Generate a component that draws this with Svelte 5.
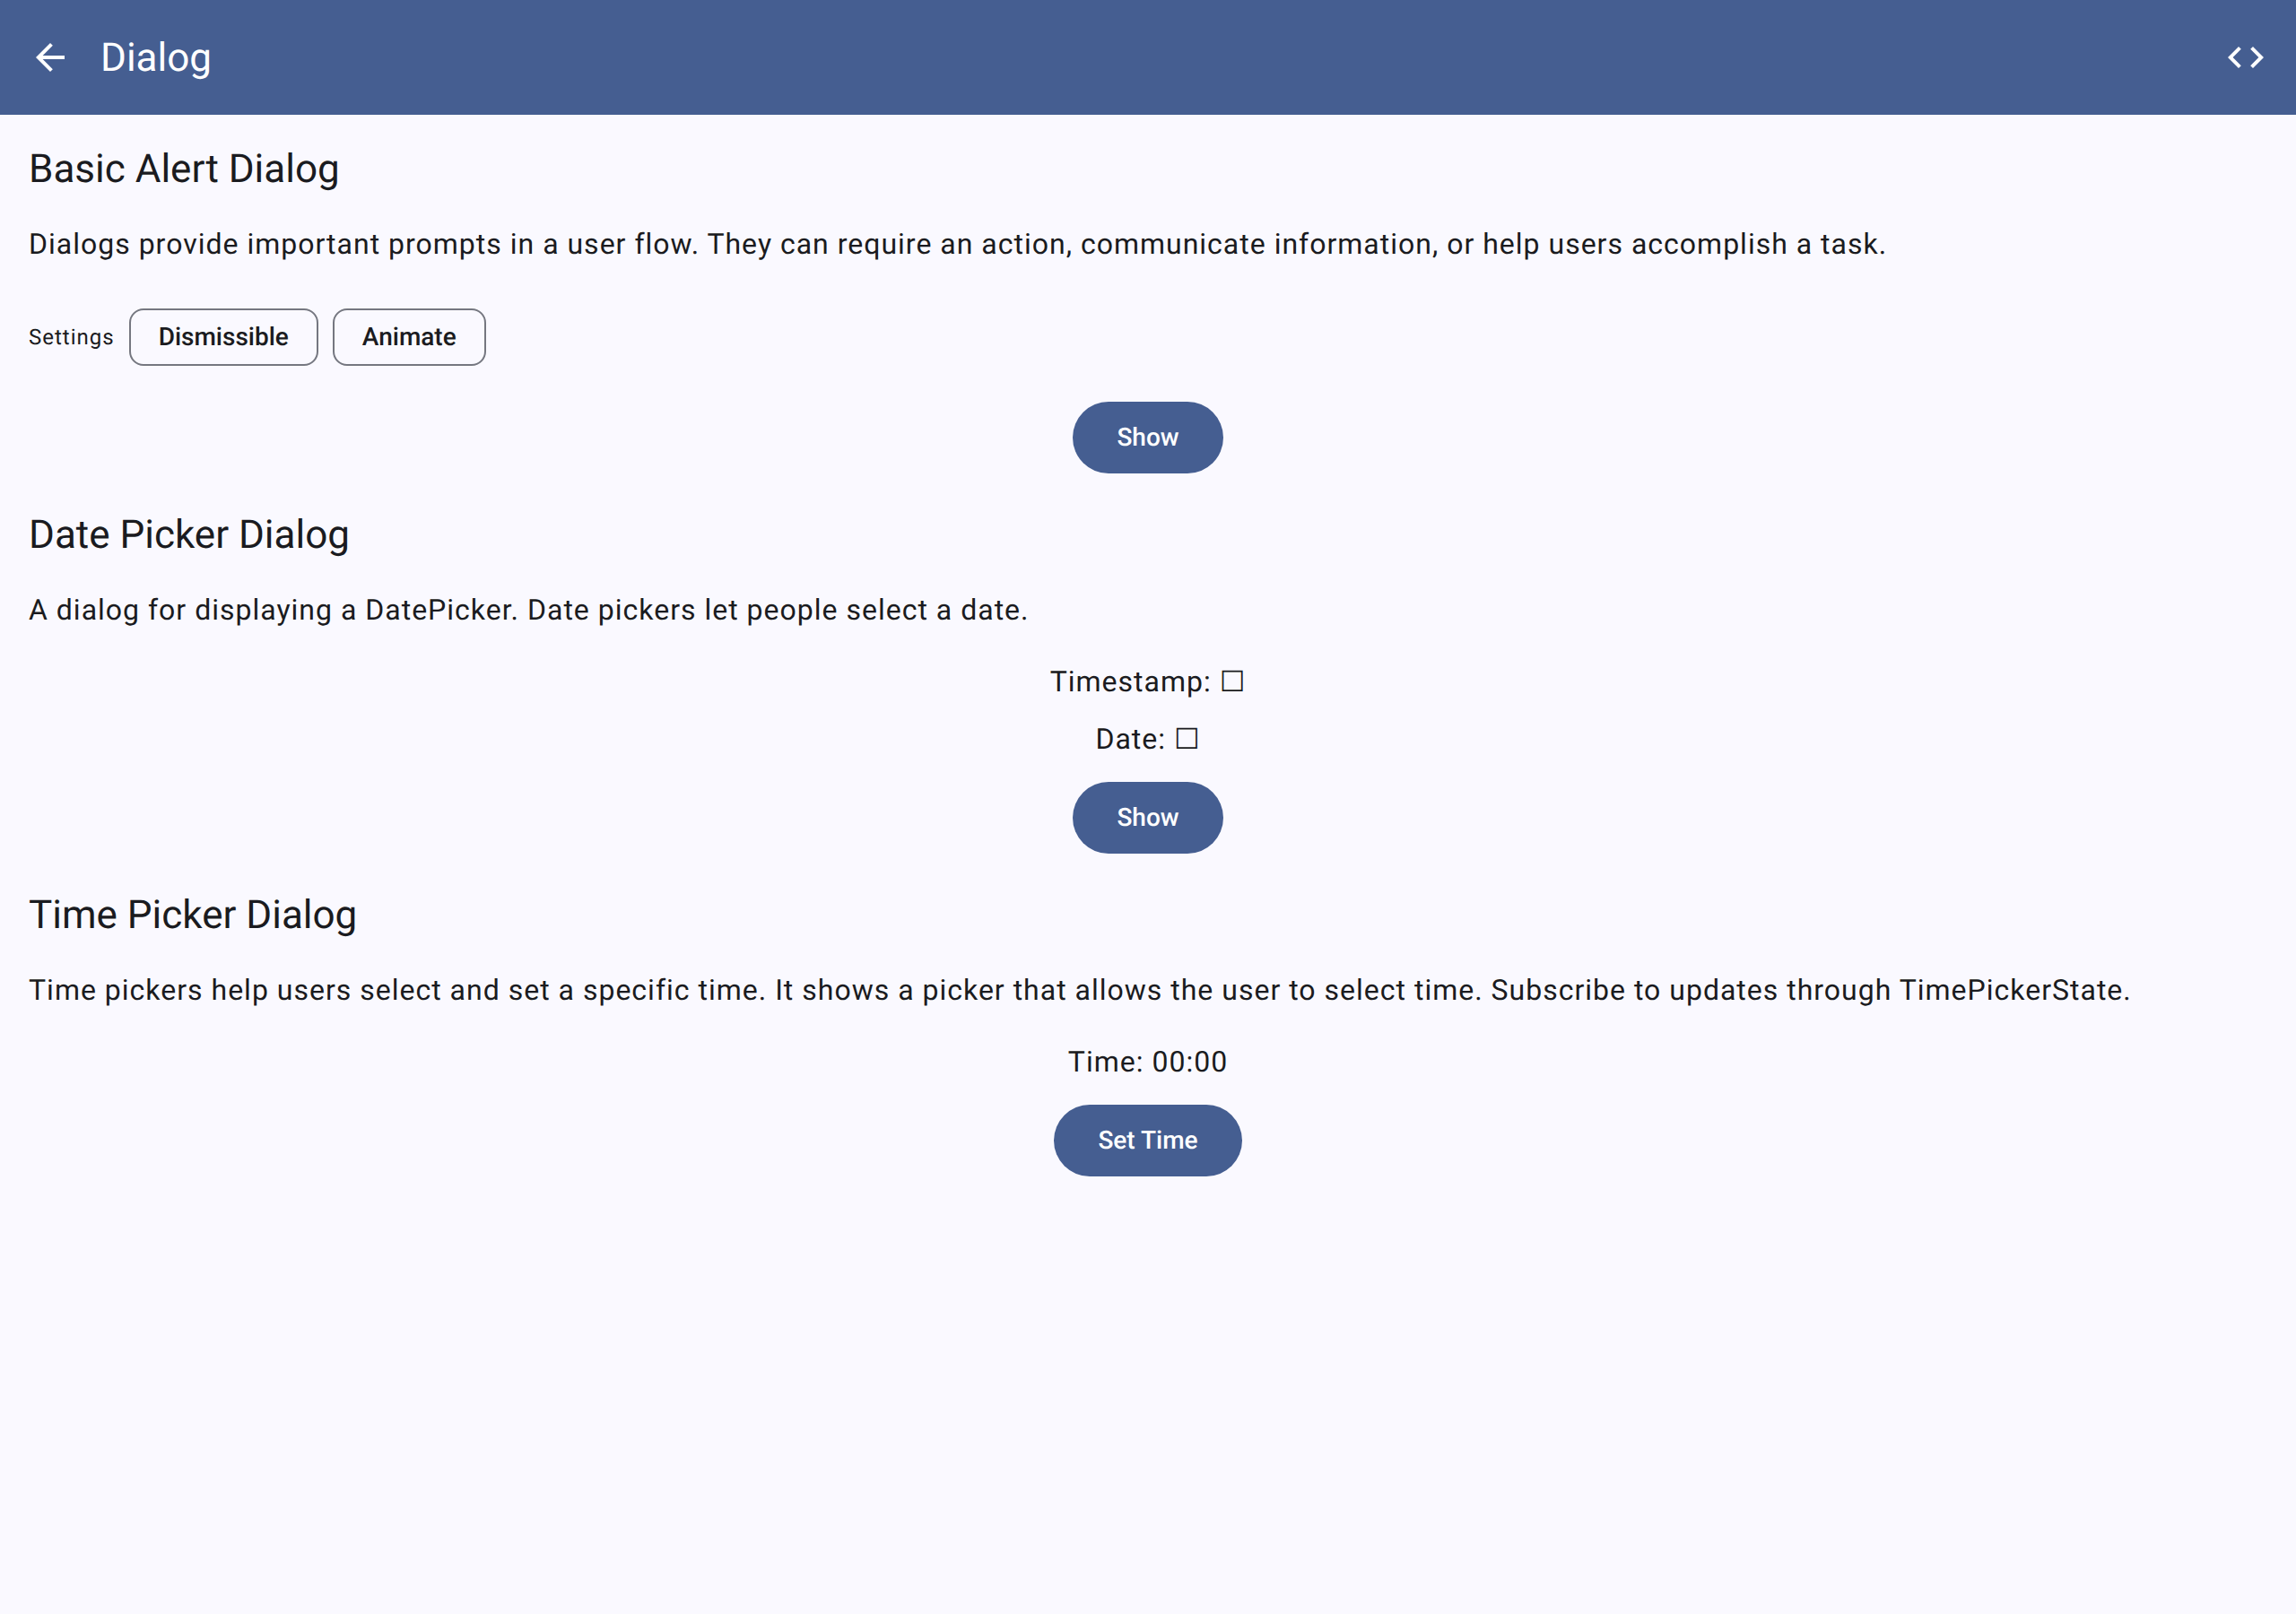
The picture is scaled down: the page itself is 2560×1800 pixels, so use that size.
<script>
  let settings = $state([
    { label: 'Dismissible', on: false },
    { label: 'Animate', on: false },
  ]);
</script>

<header class="bar">
  <button class="icon-button" type="button" aria-label="Back">
    <svg viewBox="0 0 24 24" aria-hidden="true">
      <path d="M20 11H7.83l5.59-5.59L12 4l-8 8 8 8 1.41-1.41L7.83 13H20v-2z" />
    </svg>
  </button>
  <h1 class="title">Dialog</h1>
  <button class="icon-button" type="button" aria-label="View source">
    <svg viewBox="0 0 24 24" aria-hidden="true">
      <path d="M9.4 16.6 4.8 12l4.6-4.6L8 6l-6 6 6 6 1.4-1.4zm5.2 0 4.6-4.6-4.6-4.6L16 6l6 6-6 6-1.4-1.4z" />
    </svg>
  </button>
</header>

<main class="content">
  <section class="section">
    <h2 class="title">Basic Alert Dialog</h2>
    <p class="body">
      Dialogs provide important prompts in a user flow. They can require an action, communicate
      information, or help users accomplish a task.
    </p>
    <div class="settings">
      <span class="caption">Settings</span>
      {#each settings as setting}
        <button
          class="chip"
          class:selected={setting.on}
          type="button"
          aria-pressed={setting.on}
          onclick={() => (setting.on = !setting.on)}>{setting.label}</button>
      {/each}
    </div>
    <div class="demo">
      <button class="filled" type="button">Show</button>
    </div>
  </section>

  <section class="section">
    <h2 class="title">Date Picker Dialog</h2>
    <p class="body">A dialog for displaying a DatePicker. Date pickers let people select a date.</p>
    <div class="demo">
      <p class="body">Timestamp: <span class="empty">☐</span></p>
      <p class="body">Date: <span class="empty">☐</span></p>
      <button class="filled" type="button">Show</button>
    </div>
  </section>

  <section class="section">
    <h2 class="title">Time Picker Dialog</h2>
    <p class="body">
      Time pickers help users select and set a specific time. It shows a picker that allows the user
      to select time. Subscribe to updates through TimePickerState.
    </p>
    <div class="demo">
      <p class="body">Time: 00:00</p>
      <button class="filled" type="button">Set Time</button>
    </div>
  </section>
</main>

<style>
  :global(body) {
    background: #faf9ff;
    color: #1a1b20;
    font-family: Roboto, 'Liberation Sans', sans-serif;
    text-rendering: geometricPrecision;
  }

  h1,
  h2,
  p {
    margin: 0;
  }

  button {
    font: inherit;
    text-rendering: inherit;
    cursor: pointer;
  }

  .bar {
    display: flex;
    align-items: center;
    gap: 32px;
    padding: 36px 32px;
    background: #455e91;
    color: #fff;
  }

  .bar .title {
    flex: 1;
  }

  .icon-button {
    display: flex;
    padding: 0;
    border: 0;
    background: none;
    color: inherit;
  }

  .icon-button svg {
    width: 48px;
    height: 48px;
    fill: currentColor;
  }

  .title {
    font-size: 44px;
    font-weight: 400;
    line-height: 56px;
  }

  .body {
    font-size: 32px;
    line-height: 48px;
    letter-spacing: 1px;
  }

  .content {
    display: flex;
    flex-direction: column;
    gap: 40px;
    padding: 32px;
  }

  .section {
    display: flex;
    flex-direction: column;
    gap: 32px;
  }

  .settings {
    display: flex;
    align-items: center;
    gap: 16px;
    padding: 16px 0 8px;
  }

  .caption {
    font-size: 24px;
    line-height: 32px;
    letter-spacing: 1px;
  }

  .chip {
    box-sizing: border-box;
    height: 64px;
    padding: 0 31px;
    border: 2px solid #757780;
    border-radius: 16px;
    background: none;
    color: inherit;
    font-size: 28px;
    font-weight: 500;
    line-height: 40px;
  }

  .chip.selected {
    border-color: #dae2f9;
    background: #dae2f9;
  }

  .demo {
    display: flex;
    flex-direction: column;
    align-items: center;
    gap: 16px;
  }

  .filled {
    height: 80px;
    margin-top: 8px;
    padding: 0 49px;
    border: 0;
    border-radius: 40px;
    background: #455e91;
    color: #fff;
    font-size: 28px;
    font-weight: 500;
    line-height: 40px;
  }

  .settings + .demo .filled {
    margin-top: 0;
  }

  .empty {
    font-family: 'DejaVu Sans', sans-serif;
  }
</style>
